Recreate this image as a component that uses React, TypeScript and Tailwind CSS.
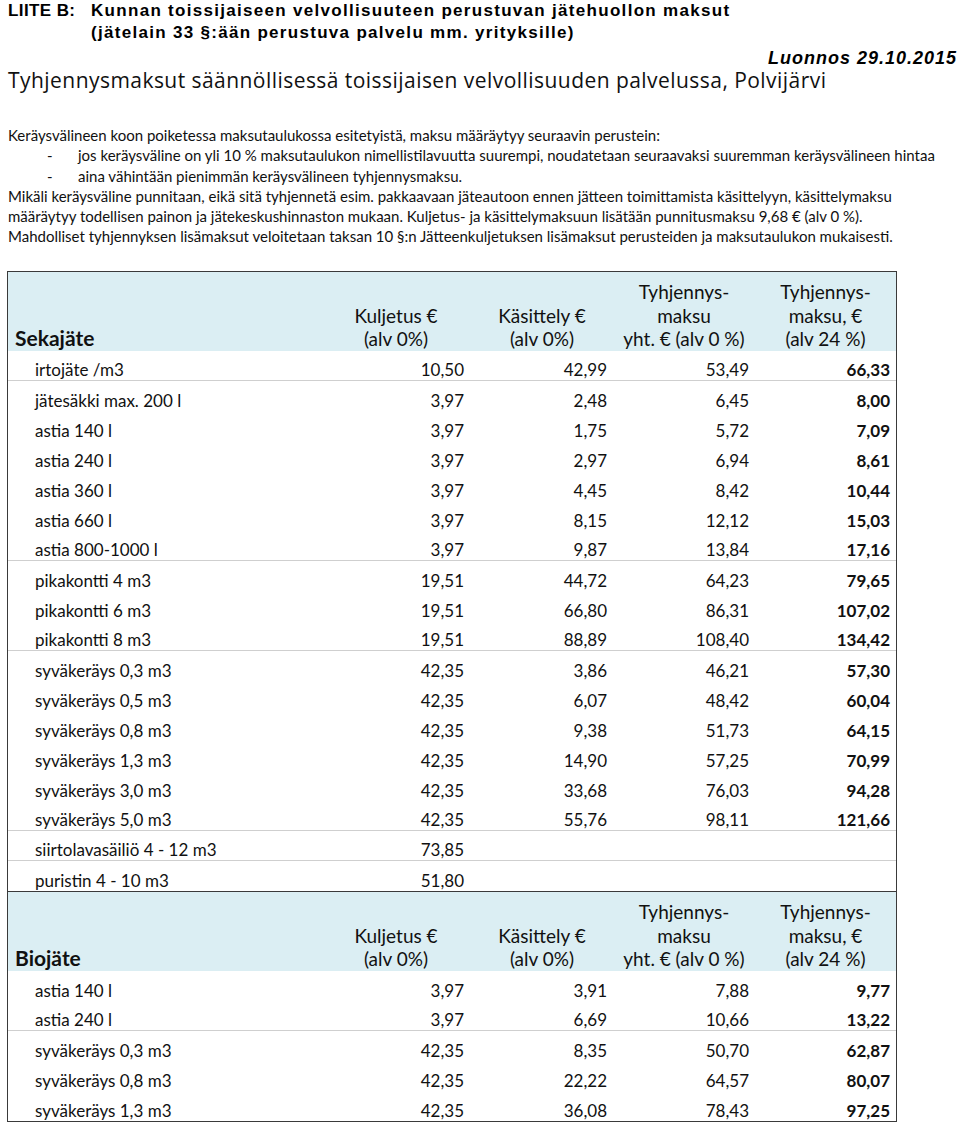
import React from "react";

type Row = { label: string; a: string; b?: string; c?: string; d?: string; sep?: boolean };

const seka: Row[] = [
  { label: "irtojäte /m3", a: "10,50", b: "42,99", c: "53,49", d: "66,33", sep: true },
  { label: "jätesäkki max. 200 l", a: "3,97", b: "2,48", c: "6,45", d: "8,00" },
  { label: "astia 140 l", a: "3,97", b: "1,75", c: "5,72", d: "7,09" },
  { label: "astia 240 l", a: "3,97", b: "2,97", c: "6,94", d: "8,61" },
  { label: "astia 360 l", a: "3,97", b: "4,45", c: "8,42", d: "10,44" },
  { label: "astia 660 l", a: "3,97", b: "8,15", c: "12,12", d: "15,03" },
  { label: "astia 800-1000 l", a: "3,97", b: "9,87", c: "13,84", d: "17,16", sep: true },
  { label: "pikakontti 4 m3", a: "19,51", b: "44,72", c: "64,23", d: "79,65" },
  { label: "pikakontti 6 m3", a: "19,51", b: "66,80", c: "86,31", d: "107,02" },
  { label: "pikakontti 8 m3", a: "19,51", b: "88,89", c: "108,40", d: "134,42", sep: true },
  { label: "syväkeräys 0,3 m3", a: "42,35", b: "3,86", c: "46,21", d: "57,30" },
  { label: "syväkeräys 0,5 m3", a: "42,35", b: "6,07", c: "48,42", d: "60,04" },
  { label: "syväkeräys 0,8 m3", a: "42,35", b: "9,38", c: "51,73", d: "64,15" },
  { label: "syväkeräys 1,3 m3", a: "42,35", b: "14,90", c: "57,25", d: "70,99" },
  { label: "syväkeräys 3,0 m3", a: "42,35", b: "33,68", c: "76,03", d: "94,28" },
  { label: "syväkeräys 5,0 m3", a: "42,35", b: "55,76", c: "98,11", d: "121,66", sep: true },
  { label: "siirtolavasäiliö 4 - 12 m3", a: "73,85", sep: true },
  { label: "puristin 4 - 10 m3", a: "51,80" },
];

const bio: Row[] = [
  { label: "astia 140 l", a: "3,97", b: "3,91", c: "7,88", d: "9,77" },
  { label: "astia 240 l", a: "3,97", b: "6,69", c: "10,66", d: "13,22", sep: true },
  { label: "syväkeräys 0,3 m3", a: "42,35", b: "8,35", c: "50,70", d: "62,87" },
  { label: "syväkeräys 0,8 m3", a: "42,35", b: "22,22", c: "64,57", d: "80,07" },
  { label: "syväkeräys 1,3 m3", a: "42,35", b: "36,08", c: "78,43", d: "97,25" },
];

const grid = "grid grid-cols-[321px_142px_142px_142px_141px]";

function Header({ title }: { title: string }) {
  return (
    <div className={`${grid} h-[80px] bg-[#dbeef3] border-t border-[#3a3a3a] text-[19px] leading-[23.5px] text-[#111]`}>
      <div className="flex items-end pl-[7px] pb-[1px] text-[21px] font-bold leading-[24px]">{title}</div>
      <div className="flex flex-col items-center justify-end pr-[8px]">
        <span>Kuljetus €</span>
        <span>(alv 0%)</span>
      </div>
      <div className="flex flex-col items-center justify-end">
        <span>Käsittely €</span>
        <span>(alv 0%)</span>
      </div>
      <div className="flex flex-col items-center justify-end">
        <span>Tyhjennys-</span>
        <span>maksu</span>
        <span>yht. € (alv 0 %)</span>
      </div>
      <div className="flex flex-col items-center justify-end">
        <span>Tyhjennys-</span>
        <span>maksu, €</span>
        <span>(alv 24 %)</span>
      </div>
    </div>
  );
}

function Rows({ rows }: { rows: Row[] }) {
  return (
    <>
      {rows.map((r, i) => (
        <div
          key={i}
          className={`${grid} h-[30px] items-end text-[17px] leading-[20px] text-[#111] ${r.sep ? "border-b border-[#cfcfcf]" : ""}`}
        >
          <div className="pl-[27px]">{r.label}</div>
          <div className="text-right pr-[7px]">{r.a}</div>
          <div className="text-right pr-[6px]">{r.b ?? ""}</div>
          <div className="text-right pr-[6px]">{r.c ?? ""}</div>
          <div className="text-right pr-[6px] font-bold">{r.d ?? ""}</div>
        </div>
      ))}
    </>
  );
}

export default function App() {
  const body = { fontFamily: "Lato, 'Noto Sans', sans-serif" };
  return (
    <div className="w-[960px] h-[1123px] bg-white overflow-hidden text-black">
      <div style={{ fontFamily: "'Liberation Sans', Arial, sans-serif" }} className="pt-[0px] text-[17px] font-bold leading-[22px] tracking-[1.3px]">
        <div className="flex">
          <div className="w-[91px] pl-[8px] tracking-[0.4px]">LIITE B:</div>
          <div>
            <div>Kunnan toissijaiseen velvollisuuteen perustuvan jätehuollon maksut</div>
            <div>(jätelain 33 §:ään perustuva palvelu mm. yrityksille)</div>
          </div>
        </div>
        <div className="flex justify-end pr-[3px] mt-[3px] italic text-[18px] leading-[22px] tracking-[1px]">Luonnos 29.10.2015</div>
      </div>
      <div style={{ fontFamily: "'Open Sans', sans-serif" }} className="pl-[8px] text-[21px] leading-[28px] tracking-[0.45px] text-[#111] -mt-[3px]">
        Tyhjennysmaksut säännöllisessä toissijaisen velvollisuuden palvelussa, Polvijärvi
      </div>

      <div style={body} className="pl-[8px] mt-[31px] text-[15px] leading-[20.3px] text-[#111]">
        <div>Keräysvälineen koon poiketessa maksutaulukossa esitetyistä, maksu määräytyy seuraavin perustein:</div>
        <div className="flex">
          <span className="w-[70px] pl-[39px]">-</span>
          <span>jos keräysväline on yli 10 % maksutaulukon nimellistilavuutta suurempi, noudatetaan seuraavaksi suuremman keräysvälineen hintaa</span>
        </div>
        <div className="flex">
          <span className="w-[70px] pl-[39px]">-</span>
          <span>aina vähintään pienimmän keräysvälineen tyhjennysmaksu.</span>
        </div>
        <div>Mikäli keräysväline punnitaan, eikä sitä tyhjennetä esim. pakkaavaan jäteautoon ennen jätteen toimittamista käsittelyyn, käsittelymaksu</div>
        <div>määräytyy todellisen painon ja jätekeskushinnaston mukaan. Kuljetus- ja käsittelymaksuun lisätään punnitusmaksu 9,68 € (alv 0 %).</div>
        <div>Mahdolliset tyhjennyksen lisämaksut veloitetaan taksan 10 §:n Jätteenkuljetuksen lisämaksut perusteiden ja maksutaulukon mukaisesti.</div>
      </div>

      <div style={body} className="ml-[7px] mt-[24px] w-[890px] border-l border-r border-[#3a3a3a]">
        <Header title="Sekajäte" />
        <Rows rows={seka} />
        <Header title="Biojäte" />
        <Rows rows={bio} />
        <div className="border-t border-[#3a3a3a]" />
      </div>
    </div>
  );
}
